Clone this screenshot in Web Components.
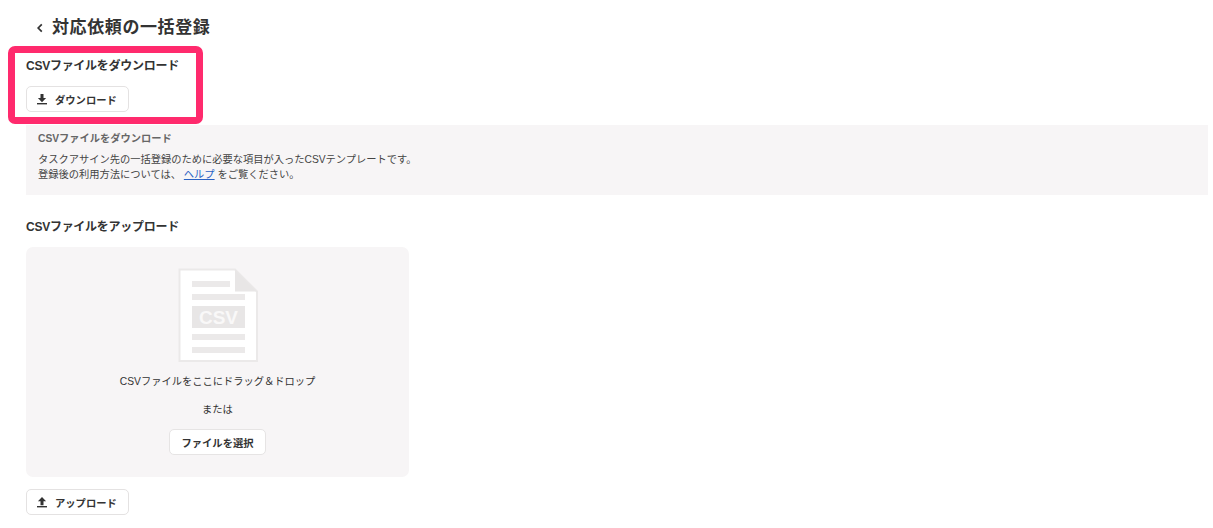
<!DOCTYPE html>
<html lang="ja"><head><meta charset="utf-8">
<style>
html,body{margin:0;background:#fff}
body{width:1213px;height:528px;overflow:hidden;font-family:"Liberation Sans","Noto Sans CJK JP",sans-serif;color:#333}
</style></head><body>
<bulk-page>
<page-title>対応依頼の一括登録</page-title>
<section-heading class="first">CSVファイルをダウンロード</section-heading>
<app-button icon="download" class="down">ダウンロード</app-button>
<info-box heading="CSVファイルをダウンロード">
タスクアサイン先の一括登録のために必要な項目が入ったCSVテンプレートです。<br>登録後の利用方法については、 <a href="#">ヘルプ</a> をご覧ください。
</info-box>
<section-heading class="second">CSVファイルをアップロード</section-heading>
<drop-zone></drop-zone>
<app-button icon="upload" class="up">アップロード</app-button>
<highlight-frame></highlight-frame>
</bulk-page>
<script>
function def(name,html){
  customElements.define(name,class extends HTMLElement{
    constructor(){super();this.attachShadow({mode:'open'}).innerHTML=html;}
  });
}
def('bulk-page',`<style>:host{display:flex;flex-direction:column;align-items:flex-start;box-sizing:border-box;width:1213px;height:528px;padding:0 5px 0 26px;position:relative}
::slotted(page-title){margin-top:17px}
::slotted(section-heading.first){margin-top:19px}
::slotted(app-button.down){margin-top:12px}
::slotted(info-box){margin-top:13px}
::slotted(section-heading.second){margin-top:24px}
::slotted(drop-zone){margin-top:12px}
::slotted(app-button.up){margin-top:12px}
</style><slot></slot>`);
def('page-title',`<style>:host{display:flex;align-items:center;height:22px;gap:8px;color:#333;font-size:17px;font-weight:700;letter-spacing:.6px;line-height:22px}
svg{display:block;margin-left:10px}</style>
<svg width="8" height="10" viewBox="0 0 8 10" fill="none"><path d="M5.8 1.4 2.2 5l3.6 3.6" stroke="#333" stroke-width="1.7"/></svg><span><slot></slot></span>`);
def('section-heading',`<style>:host{display:block;font-size:12px;font-weight:700;line-height:16px;color:#333;letter-spacing:-.26px}</style><slot></slot>`);
const icons={
 download:'<path d="M4.5 1h3v4h2.6L6 9.3 1.9 5h2.6z" fill="#333"/><rect x="1" y="10" width="10" height="1.4" fill="#333"/>',
 upload:'<path d="M6 1l4.1 4.3H7.5v4h-3v-4H1.9z" fill="#333"/><rect x="1" y="10" width="10" height="1.4" fill="#333"/>'
};
customElements.define('app-button',class extends HTMLElement{
 constructor(){super();const r=this.attachShadow({mode:'open'});
 r.innerHTML=`<style>:host{display:flex;align-items:center;box-sizing:border-box;width:103px;height:26px;padding-left:9px;gap:7px;background:#fff;border:1px solid #e4e2e2;border-radius:5px;font-size:10.3px;font-weight:700;color:#333}
 svg{display:block;flex:none}</style><svg width="12" height="12" viewBox="0 0 12 12">${icons[this.getAttribute('icon')]}</svg><span><slot></slot></span>`;}
});
customElements.define('info-box',class extends HTMLElement{
 constructor(){super();const r=this.attachShadow({mode:'open'});
 r.innerHTML=`<style>:host{display:block;box-sizing:border-box;width:1182px;height:70px;padding:6px 12px 0;background:#f7f5f6;font-size:10.25px;line-height:15px;color:#444}
 h3{margin:0 0 6px;font-size:10.25px;line-height:15px;font-weight:700;color:#666}
 ::slotted(a){color:#2b62c4}</style><h3>${this.getAttribute('heading')}</h3><slot></slot>`;}
});
def('csv-art',`<style>:host{display:block;width:80px;height:94px}svg{display:block}text{font:700 19px "Liberation Sans",sans-serif;fill:#f9f8f8}</style>
<svg width="80" height="94" viewBox="0 0 80 94">
<path d="M1.5 1.5H57L79 23.5V93H1.5z" fill="#fff" stroke="#ebe9e9" stroke-width="2"/>
<path d="M57 1.5 79 23.5H57z" fill="#e8e6e6"/>
<rect x="14" y="13" width="38" height="6" fill="#ebe9e9"/>
<rect x="14" y="26" width="53" height="6" fill="#ebe9e9"/>
<rect x="14" y="38" width="53" height="22" fill="#e8e6e6"/>
<text x="40.5" y="55.5" text-anchor="middle">CSV</text>
<rect x="14" y="66" width="53" height="6" fill="#ebe9e9"/>
<rect x="14" y="79" width="53" height="6" fill="#ebe9e9"/>
</svg>`);
def('drop-zone',`<style>:host{display:flex;flex-direction:column;align-items:center;box-sizing:border-box;width:383px;height:230px;padding-top:21px;background:#f7f5f6;border-radius:7px;font-size:10.25px;line-height:14px;color:#333}
p{margin:0}.a{margin-top:13px}.b{margin-top:14px}
button{margin-top:12px;width:97px;height:26px;box-sizing:border-box;background:#fff;border:1px solid #e6e4e4;border-radius:5px;font:700 10.3px "Liberation Sans","Noto Sans CJK JP",sans-serif;color:#333;padding:0}
</style><csv-art></csv-art><p class="a">CSVファイルをここにドラッグ＆ドロップ</p><p class="b">または</p><button>ファイルを選択</button>`);
def('highlight-frame',`<style>:host{position:absolute;left:8px;top:46px;width:195px;height:78px;box-sizing:border-box;border:7px solid #ff2a6d;border-radius:7px;pointer-events:none}</style>`);
</script>
</body></html>
